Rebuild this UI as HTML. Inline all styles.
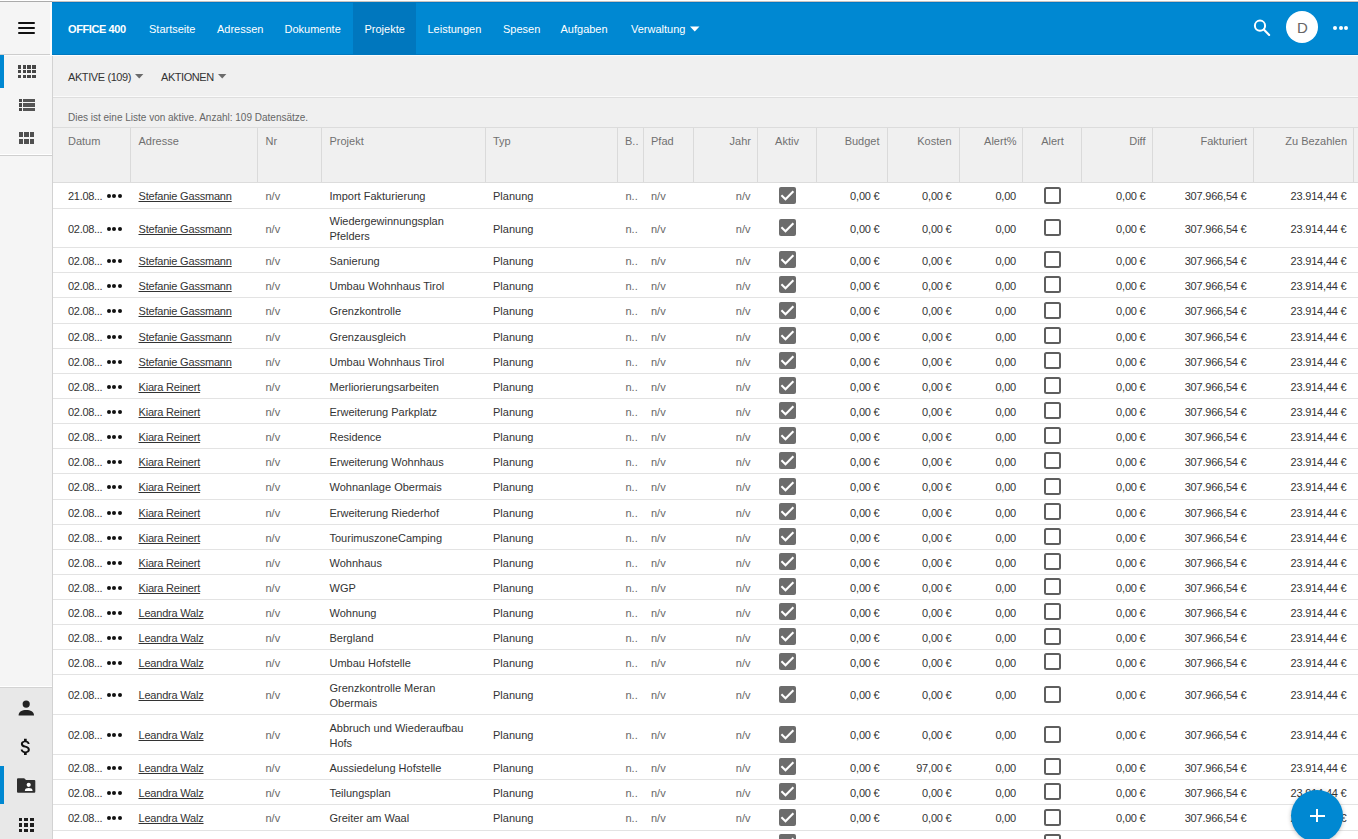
<!DOCTYPE html>
<html><head><meta charset="utf-8"><title>Projekte</title>
<style>
html,body{margin:0;padding:0;}
body{width:1358px;height:839px;overflow:hidden;position:relative;background:#fff;font-family:"Liberation Sans", sans-serif;}
.t{position:absolute;white-space:nowrap;line-height:20px;font-family:"Liberation Sans", sans-serif;}
</style></head><body>
<div style="position:absolute;left:0px;top:1px;width:52px;height:1px;background:#ababab;"></div><div style="position:absolute;left:52px;top:1px;width:1306px;height:1px;background:#c9c3bf;"></div><div style="position:absolute;left:0px;top:2px;width:52px;height:53px;background:#f5f5f5;"></div><div style="position:absolute;left:50px;top:2px;width:2px;height:53px;background:#fdfdfd;"></div><div style="position:absolute;left:52px;top:2px;width:1306px;height:53px;background:#0088d2;"></div><div style="position:absolute;left:52px;top:2px;width:1306px;height:1px;background:#0079c6;"></div><div style="position:absolute;left:52px;top:54px;width:1306px;height:1px;background:#0079c0;"></div><div style="position:absolute;left:353px;top:2px;width:63px;height:53px;background:#0077be;"></div><div style="position:absolute;left:0px;top:55px;width:1358px;height:1px;background:#fcfcfc;"></div><div style="position:absolute;left:0px;top:54px;width:50px;height:1px;background:#cdcdcd;"></div><div style="position:absolute;left:18px;top:22px;width:17px;height:2px;background:#111;border-radius:1px;"></div><div style="position:absolute;left:18px;top:27px;width:17px;height:2px;background:#111;border-radius:1px;"></div><div style="position:absolute;left:18px;top:32px;width:17px;height:2px;background:#111;border-radius:1px;"></div><div class="t" style="left:68px;top:19px;font-size:11px;color:#fff;font-weight:bold;letter-spacing:-0.4px;">OFFICE 400</div><div class="t" style="left:149px;top:19px;font-size:11px;color:#fff;">Startseite</div><div class="t" style="left:217px;top:19px;font-size:11px;color:#fff;">Adressen</div><div class="t" style="left:284.5px;top:19px;font-size:11px;color:#fff;">Dokumente</div><div class="t" style="left:364.5px;top:19px;font-size:11px;color:#fff;">Projekte</div><div class="t" style="left:427.5px;top:19px;font-size:11px;color:#fff;">Leistungen</div><div class="t" style="left:503px;top:19px;font-size:11px;color:#fff;">Spesen</div><div class="t" style="left:560.5px;top:19px;font-size:11px;color:#fff;">Aufgaben</div><div class="t" style="left:631px;top:19px;font-size:11px;color:#fff;">Verwaltung</div><svg style="position:absolute;left:690px;top:26px" width="10" height="6"><path d="M0 0.5 L9.5 0.5 L4.75 5.5 Z" fill="#fff"/></svg><svg style="position:absolute;left:1250px;top:16px" width="24" height="24"><circle cx="10" cy="9.7" r="5.1" fill="none" stroke="#fff" stroke-width="2"/><path d="M13.8 13.6 L19.2 19" stroke="#fff" stroke-width="2.1" stroke-linecap="round"/></svg><div style="position:absolute;left:1286px;top:11px;width:32px;height:32px;border-radius:50%;background:#fff"></div><div class="t" style="left:1202.5px;width:200px;text-align:center;top:18px;font-size:15px;color:#666;">D</div><div style="position:absolute;left:1332.9px;top:26px;width:4.2px;height:4.2px;border-radius:50%;background:#fff"></div><div style="position:absolute;left:1338.5px;top:26px;width:4.2px;height:4.2px;border-radius:50%;background:#fff"></div><div style="position:absolute;left:1344.1000000000001px;top:26px;width:4.2px;height:4.2px;border-radius:50%;background:#fff"></div><div style="position:absolute;left:0px;top:56px;width:52px;height:783px;background:#f5f5f5;"></div><div style="position:absolute;left:52px;top:56px;width:1px;height:783px;background:#d2d2d2;"></div><div style="position:absolute;left:0px;top:55px;width:4px;height:33px;background:#0088d2;"></div><div style="position:absolute;left:17.7px;top:65.0px;width:3.5px;height:3.5px;background:#474747;"></div><div style="position:absolute;left:22.549999999999997px;top:65.0px;width:3.5px;height:3.5px;background:#474747;"></div><div style="position:absolute;left:27.4px;top:65.0px;width:3.5px;height:3.5px;background:#474747;"></div><div style="position:absolute;left:32.25px;top:65.0px;width:3.5px;height:3.5px;background:#474747;"></div><div style="position:absolute;left:17.7px;top:69.95px;width:3.5px;height:3.5px;background:#474747;"></div><div style="position:absolute;left:22.549999999999997px;top:69.95px;width:3.5px;height:3.5px;background:#474747;"></div><div style="position:absolute;left:27.4px;top:69.95px;width:3.5px;height:3.5px;background:#474747;"></div><div style="position:absolute;left:32.25px;top:69.95px;width:3.5px;height:3.5px;background:#474747;"></div><div style="position:absolute;left:17.7px;top:74.9px;width:3.5px;height:3.5px;background:#474747;"></div><div style="position:absolute;left:22.549999999999997px;top:74.9px;width:3.5px;height:3.5px;background:#474747;"></div><div style="position:absolute;left:27.4px;top:74.9px;width:3.5px;height:3.5px;background:#474747;"></div><div style="position:absolute;left:32.25px;top:74.9px;width:3.5px;height:3.5px;background:#474747;"></div><div style="position:absolute;left:18.7px;top:98.5px;width:3.3px;height:3.3px;background:#474747;"></div><div style="position:absolute;left:23.3px;top:98.5px;width:11.4px;height:3.3px;background:#555;"></div><div style="position:absolute;left:18.7px;top:103.25px;width:3.3px;height:3.3px;background:#474747;"></div><div style="position:absolute;left:23.3px;top:103.25px;width:11.4px;height:3.3px;background:#555;"></div><div style="position:absolute;left:18.7px;top:108.0px;width:3.3px;height:3.3px;background:#474747;"></div><div style="position:absolute;left:23.3px;top:108.0px;width:11.4px;height:3.3px;background:#555;"></div><div style="position:absolute;left:18.7px;top:132px;width:4.5px;height:4.8px;background:#505050;"></div><div style="position:absolute;left:24.299999999999997px;top:132px;width:4.5px;height:4.8px;background:#505050;"></div><div style="position:absolute;left:29.9px;top:132px;width:4.5px;height:4.8px;background:#505050;"></div><div style="position:absolute;left:18.7px;top:139px;width:4.5px;height:4.8px;background:#505050;"></div><div style="position:absolute;left:24.299999999999997px;top:139px;width:4.5px;height:4.8px;background:#505050;"></div><div style="position:absolute;left:29.9px;top:139px;width:4.5px;height:4.8px;background:#505050;"></div><div style="position:absolute;left:0px;top:154px;width:52px;height:1px;background:#ffffff;"></div><div style="position:absolute;left:0px;top:155px;width:52px;height:1px;background:#cfcfcf;"></div><div style="position:absolute;left:0px;top:686px;width:52px;height:1px;background:#ffffff;"></div><div style="position:absolute;left:0px;top:687px;width:52px;height:1px;background:#d3d3d3;"></div><div style="position:absolute;left:0px;top:688px;width:52px;height:151px;background:#e8e8e8;"></div><div style="position:absolute;left:0px;top:766px;width:4px;height:38px;background:#0088d2;"></div><svg style="position:absolute;left:16px;top:698px" width="22" height="20"><circle cx="10.2" cy="6.1" r="3.6" fill="#222"/><path d="M2.6 17.5 C2.6 13.5 6 12 10.2 12 C14.4 12 18 13.5 18 17.5 Z" fill="#222"/></svg><svg style="position:absolute;left:14.8px;top:735.9px" width="21.6" height="21.6" viewBox="0 0 24 24"><path fill="#111" d="M11.8 10.9c-2.27-.59-3-1.2-3-2.15 0-1.09 1.01-1.85 2.7-1.85 1.78 0 2.44.85 2.5 2.1h2.21c-.07-1.72-1.12-3.3-3.21-3.81V3h-3v2.16c-1.94.42-3.5 1.68-3.5 3.61 0 2.31 1.91 3.46 4.7 4.130 2.5.6 3 1.480 3 2.41 0 .69-.49 1.79-2.7 1.79-2.06 0-2.87-.92-2.98-2.1h-2.2c.12 2.19 1.76 3.42 3.68 3.83V21h3v-2.15c1.95-.37 3.5-1.5 3.5-3.55 0-2.840-2.43-3.81-4.7-4.4z"/></svg><svg style="position:absolute;left:16px;top:777px" width="22" height="18"><path d="M1 2.2 Q1 1.2 2 1.2 L8.2 1.2 L10 3 L18.3 3 Q19.3 3 19.3 4 L19.3 14.8 Q19.3 15.8 18.3 15.8 L2 15.8 Q1 15.8 1 14.8 Z" fill="#2e2e2e"/><circle cx="12.7" cy="7.8" r="2.1" fill="#fff"/><path d="M8.8 14 C8.8 11.6 10.6 11 12.7 11 C14.8 11 16.6 11.6 16.6 14 Z" fill="#fff"/></svg><div style="position:absolute;left:18.6px;top:817.7px;width:3.9px;height:3.6px;background:#1e1e1e;"></div><div style="position:absolute;left:24.3px;top:817.7px;width:3.9px;height:3.6px;background:#1e1e1e;"></div><div style="position:absolute;left:30.0px;top:817.7px;width:3.9px;height:3.6px;background:#1e1e1e;"></div><div style="position:absolute;left:18.6px;top:823.3000000000001px;width:3.9px;height:3.6px;background:#1e1e1e;"></div><div style="position:absolute;left:24.3px;top:823.3000000000001px;width:3.9px;height:3.6px;background:#1e1e1e;"></div><div style="position:absolute;left:30.0px;top:823.3000000000001px;width:3.9px;height:3.6px;background:#1e1e1e;"></div><div style="position:absolute;left:18.6px;top:828.9000000000001px;width:3.9px;height:3.6px;background:#1e1e1e;"></div><div style="position:absolute;left:24.3px;top:828.9000000000001px;width:3.9px;height:3.6px;background:#1e1e1e;"></div><div style="position:absolute;left:30.0px;top:828.9000000000001px;width:3.9px;height:3.6px;background:#1e1e1e;"></div><div style="position:absolute;left:53px;top:56px;width:1305px;height:41px;background:#f0f0f0;"></div><div style="position:absolute;left:53px;top:96px;width:1305px;height:1px;background:#fafafa;"></div><div style="position:absolute;left:53px;top:97px;width:1305px;height:1px;background:#dedede;"></div><div class="t" style="left:68px;top:67px;font-size:11px;color:#333;letter-spacing:-0.4px;">AKTIVE (109)</div><svg style="position:absolute;left:134.5px;top:74px" width="9" height="5"><path d="M0 0 L8.4 0 L4.2 4.6 Z" fill="#6b6b6b"/></svg><div class="t" style="left:161px;top:67px;font-size:11px;color:#333;letter-spacing:-0.45px;">AKTIONEN</div><svg style="position:absolute;left:218px;top:74px" width="9" height="5"><path d="M0 0 L8.4 0 L4.2 4.6 Z" fill="#6b6b6b"/></svg><div style="position:absolute;left:53px;top:98px;width:1305px;height:29px;background:#f0f0f0;"></div><div class="t" style="left:68px;top:108px;font-size:10px;color:#666;">Dies ist eine Liste von aktive. Anzahl: 109 Datensätze.</div><div style="position:absolute;left:53px;top:127px;width:1305px;height:1px;background:#dcdcdc;"></div><div style="position:absolute;left:53px;top:128px;width:1305px;height:54px;background:#f0f0f0;"></div><div style="position:absolute;left:53px;top:182px;width:1305px;height:1px;background:#dcdcdc;"></div><div style="position:absolute;left:130px;top:128px;width:1px;height:54px;background:#dadada;"></div><div style="position:absolute;left:257px;top:128px;width:1px;height:54px;background:#dadada;"></div><div style="position:absolute;left:321px;top:128px;width:1px;height:54px;background:#dadada;"></div><div style="position:absolute;left:485px;top:128px;width:1px;height:54px;background:#dadada;"></div><div style="position:absolute;left:617px;top:128px;width:1px;height:54px;background:#dadada;"></div><div style="position:absolute;left:643px;top:128px;width:1px;height:54px;background:#dadada;"></div><div style="position:absolute;left:693px;top:128px;width:1px;height:54px;background:#dadada;"></div><div style="position:absolute;left:757px;top:128px;width:1px;height:54px;background:#dadada;"></div><div style="position:absolute;left:816px;top:128px;width:1px;height:54px;background:#dadada;"></div><div style="position:absolute;left:887px;top:128px;width:1px;height:54px;background:#dadada;"></div><div style="position:absolute;left:959px;top:128px;width:1px;height:54px;background:#dadada;"></div><div style="position:absolute;left:1022px;top:128px;width:1px;height:54px;background:#dadada;"></div><div style="position:absolute;left:1081px;top:128px;width:1px;height:54px;background:#dadada;"></div><div style="position:absolute;left:1152px;top:128px;width:1px;height:54px;background:#dadada;"></div><div style="position:absolute;left:1253px;top:128px;width:1px;height:54px;background:#dadada;"></div><div style="position:absolute;left:1353px;top:128px;width:1px;height:54px;background:#dadada;"></div><div class="t" style="left:68px;top:131px;font-size:11px;color:#707070;">Datum</div><div class="t" style="left:138.5px;top:131px;font-size:11px;color:#707070;">Adresse</div><div class="t" style="left:265.5px;top:131px;font-size:11px;color:#707070;">Nr</div><div class="t" style="left:329.5px;top:131px;font-size:11px;color:#707070;">Projekt</div><div class="t" style="left:493px;top:131px;font-size:11px;color:#707070;">Typ</div><div class="t" style="left:625px;top:131px;font-size:11px;color:#707070;">B..</div><div class="t" style="left:651px;top:131px;font-size:11px;color:#707070;">Pfad</div><div class="t" style="right:607px;top:131px;font-size:11px;color:#707070;">Jahr</div><div class="t" style="left:687px;width:200px;text-align:center;top:131px;font-size:11px;color:#707070;">Aktiv</div><div class="t" style="right:478.5px;top:131px;font-size:11px;color:#707070;">Budget</div><div class="t" style="right:406.5px;top:131px;font-size:11px;color:#707070;">Kosten</div><div class="t" style="right:341.5px;top:131px;font-size:11px;color:#707070;">Alert%</div><div class="t" style="left:952.5px;width:200px;text-align:center;top:131px;font-size:11px;color:#707070;">Alert</div><div class="t" style="right:212.5px;top:131px;font-size:11px;color:#707070;">Diff</div><div class="t" style="right:111px;top:131px;font-size:11px;color:#707070;">Fakturiert</div><div class="t" style="right:11px;top:131px;font-size:11px;color:#707070;">Zu Bezahlen</div><div style="position:absolute;left:53px;top:208px;width:1305px;height:1px;background:#e3e3e3;"></div><div class="t" style="left:68px;top:186px;font-size:11px;color:#333;letter-spacing:-0.3px;">21.08...</div><div style="position:absolute;left:106.60000000000001px;top:193.8px;width:4.2px;height:4.2px;border-radius:50%;background:#111"></div><div style="position:absolute;left:112.25px;top:193.8px;width:4.2px;height:4.2px;border-radius:50%;background:#111"></div><div style="position:absolute;left:117.9px;top:193.8px;width:4.2px;height:4.2px;border-radius:50%;background:#111"></div><div class="t" style="left:138.5px;top:186px;font-size:11px;color:#333;text-decoration:underline;letter-spacing:-0.2px;">Stefanie Gassmann</div><div class="t" style="left:265.5px;top:186px;font-size:11px;color:#666;">n/v</div><div class="t" style="left:329.5px;top:186px;font-size:11px;color:#333;">Import Fakturierung</div><div class="t" style="left:493px;top:186px;font-size:11px;color:#333;">Planung</div><div class="t" style="left:625.5px;top:186px;font-size:11px;color:#666;">n..</div><div class="t" style="left:651px;top:186px;font-size:11px;color:#666;">n/v</div><div class="t" style="right:607.5px;top:186px;font-size:11px;color:#666;">n/v</div><svg style="position:absolute;left:779px;top:187px" width="17" height="17"><rect x="0" y="0" width="17" height="17" rx="2" fill="#6c6c6c"/><path d="M2.4 8.3 L6.5 12.2 L14.4 4.3" fill="none" stroke="#fff" stroke-width="2.1"/></svg><div class="t" style="right:478.5px;top:186px;font-size:11px;color:#333;letter-spacing:-0.2px;">0,00 €</div><div class="t" style="right:406.5px;top:186px;font-size:11px;color:#333;letter-spacing:-0.2px;">0,00 €</div><div class="t" style="right:342px;top:186px;font-size:11px;color:#333;letter-spacing:-0.2px;">0,00</div><svg style="position:absolute;left:1044px;top:187px" width="17" height="17"><rect x="1" y="1" width="15" height="15" rx="1.5" fill="#fff" stroke="#5e5e5e" stroke-width="2"/></svg><div class="t" style="right:212.5px;top:186px;font-size:11px;color:#333;letter-spacing:-0.2px;">0,00 €</div><div class="t" style="right:111.5px;top:186px;font-size:11px;color:#333;letter-spacing:-0.2px;">307.966,54 €</div><div class="t" style="right:11.5px;top:186px;font-size:11px;color:#333;letter-spacing:-0.2px;">23.914,44 €</div><div style="position:absolute;left:53px;top:247px;width:1305px;height:1px;background:#e3e3e3;"></div><div class="t" style="left:68px;top:219px;font-size:11px;color:#333;letter-spacing:-0.3px;">02.08...</div><div style="position:absolute;left:106.60000000000001px;top:226.8px;width:4.2px;height:4.2px;border-radius:50%;background:#111"></div><div style="position:absolute;left:112.25px;top:226.8px;width:4.2px;height:4.2px;border-radius:50%;background:#111"></div><div style="position:absolute;left:117.9px;top:226.8px;width:4.2px;height:4.2px;border-radius:50%;background:#111"></div><div class="t" style="left:138.5px;top:219px;font-size:11px;color:#333;text-decoration:underline;letter-spacing:-0.2px;">Stefanie Gassmann</div><div class="t" style="left:265.5px;top:219px;font-size:11px;color:#666;">n/v</div><div class="t" style="left:329.5px;top:211px;font-size:11px;color:#333;">Wiedergewinnungsplan</div><div class="t" style="left:329.5px;top:226px;font-size:11px;color:#333;">Pfelders</div><div class="t" style="left:493px;top:219px;font-size:11px;color:#333;">Planung</div><div class="t" style="left:625.5px;top:219px;font-size:11px;color:#666;">n..</div><div class="t" style="left:651px;top:219px;font-size:11px;color:#666;">n/v</div><div class="t" style="right:607.5px;top:219px;font-size:11px;color:#666;">n/v</div><svg style="position:absolute;left:779px;top:219px" width="17" height="17"><rect x="0" y="0" width="17" height="17" rx="2" fill="#6c6c6c"/><path d="M2.4 8.3 L6.5 12.2 L14.4 4.3" fill="none" stroke="#fff" stroke-width="2.1"/></svg><div class="t" style="right:478.5px;top:219px;font-size:11px;color:#333;letter-spacing:-0.2px;">0,00 €</div><div class="t" style="right:406.5px;top:219px;font-size:11px;color:#333;letter-spacing:-0.2px;">0,00 €</div><div class="t" style="right:342px;top:219px;font-size:11px;color:#333;letter-spacing:-0.2px;">0,00</div><svg style="position:absolute;left:1044px;top:219px" width="17" height="17"><rect x="1" y="1" width="15" height="15" rx="1.5" fill="#fff" stroke="#5e5e5e" stroke-width="2"/></svg><div class="t" style="right:212.5px;top:219px;font-size:11px;color:#333;letter-spacing:-0.2px;">0,00 €</div><div class="t" style="right:111.5px;top:219px;font-size:11px;color:#333;letter-spacing:-0.2px;">307.966,54 €</div><div class="t" style="right:11.5px;top:219px;font-size:11px;color:#333;letter-spacing:-0.2px;">23.914,44 €</div><div style="position:absolute;left:53px;top:272px;width:1305px;height:1px;background:#e3e3e3;"></div><div class="t" style="left:68px;top:251px;font-size:11px;color:#333;letter-spacing:-0.3px;">02.08...</div><div style="position:absolute;left:106.60000000000001px;top:258.8px;width:4.2px;height:4.2px;border-radius:50%;background:#111"></div><div style="position:absolute;left:112.25px;top:258.8px;width:4.2px;height:4.2px;border-radius:50%;background:#111"></div><div style="position:absolute;left:117.9px;top:258.8px;width:4.2px;height:4.2px;border-radius:50%;background:#111"></div><div class="t" style="left:138.5px;top:251px;font-size:11px;color:#333;text-decoration:underline;letter-spacing:-0.2px;">Stefanie Gassmann</div><div class="t" style="left:265.5px;top:251px;font-size:11px;color:#666;">n/v</div><div class="t" style="left:329.5px;top:251px;font-size:11px;color:#333;">Sanierung</div><div class="t" style="left:493px;top:251px;font-size:11px;color:#333;">Planung</div><div class="t" style="left:625.5px;top:251px;font-size:11px;color:#666;">n..</div><div class="t" style="left:651px;top:251px;font-size:11px;color:#666;">n/v</div><div class="t" style="right:607.5px;top:251px;font-size:11px;color:#666;">n/v</div><svg style="position:absolute;left:779px;top:251px" width="17" height="17"><rect x="0" y="0" width="17" height="17" rx="2" fill="#6c6c6c"/><path d="M2.4 8.3 L6.5 12.2 L14.4 4.3" fill="none" stroke="#fff" stroke-width="2.1"/></svg><div class="t" style="right:478.5px;top:251px;font-size:11px;color:#333;letter-spacing:-0.2px;">0,00 €</div><div class="t" style="right:406.5px;top:251px;font-size:11px;color:#333;letter-spacing:-0.2px;">0,00 €</div><div class="t" style="right:342px;top:251px;font-size:11px;color:#333;letter-spacing:-0.2px;">0,00</div><svg style="position:absolute;left:1044px;top:251px" width="17" height="17"><rect x="1" y="1" width="15" height="15" rx="1.5" fill="#fff" stroke="#5e5e5e" stroke-width="2"/></svg><div class="t" style="right:212.5px;top:251px;font-size:11px;color:#333;letter-spacing:-0.2px;">0,00 €</div><div class="t" style="right:111.5px;top:251px;font-size:11px;color:#333;letter-spacing:-0.2px;">307.966,54 €</div><div class="t" style="right:11.5px;top:251px;font-size:11px;color:#333;letter-spacing:-0.2px;">23.914,44 €</div><div style="position:absolute;left:53px;top:297px;width:1305px;height:1px;background:#e3e3e3;"></div><div class="t" style="left:68px;top:276px;font-size:11px;color:#333;letter-spacing:-0.3px;">02.08...</div><div style="position:absolute;left:106.60000000000001px;top:283.8px;width:4.2px;height:4.2px;border-radius:50%;background:#111"></div><div style="position:absolute;left:112.25px;top:283.8px;width:4.2px;height:4.2px;border-radius:50%;background:#111"></div><div style="position:absolute;left:117.9px;top:283.8px;width:4.2px;height:4.2px;border-radius:50%;background:#111"></div><div class="t" style="left:138.5px;top:276px;font-size:11px;color:#333;text-decoration:underline;letter-spacing:-0.2px;">Stefanie Gassmann</div><div class="t" style="left:265.5px;top:276px;font-size:11px;color:#666;">n/v</div><div class="t" style="left:329.5px;top:276px;font-size:11px;color:#333;">Umbau Wohnhaus Tirol</div><div class="t" style="left:493px;top:276px;font-size:11px;color:#333;">Planung</div><div class="t" style="left:625.5px;top:276px;font-size:11px;color:#666;">n..</div><div class="t" style="left:651px;top:276px;font-size:11px;color:#666;">n/v</div><div class="t" style="right:607.5px;top:276px;font-size:11px;color:#666;">n/v</div><svg style="position:absolute;left:779px;top:276px" width="17" height="17"><rect x="0" y="0" width="17" height="17" rx="2" fill="#6c6c6c"/><path d="M2.4 8.3 L6.5 12.2 L14.4 4.3" fill="none" stroke="#fff" stroke-width="2.1"/></svg><div class="t" style="right:478.5px;top:276px;font-size:11px;color:#333;letter-spacing:-0.2px;">0,00 €</div><div class="t" style="right:406.5px;top:276px;font-size:11px;color:#333;letter-spacing:-0.2px;">0,00 €</div><div class="t" style="right:342px;top:276px;font-size:11px;color:#333;letter-spacing:-0.2px;">0,00</div><svg style="position:absolute;left:1044px;top:276px" width="17" height="17"><rect x="1" y="1" width="15" height="15" rx="1.5" fill="#fff" stroke="#5e5e5e" stroke-width="2"/></svg><div class="t" style="right:212.5px;top:276px;font-size:11px;color:#333;letter-spacing:-0.2px;">0,00 €</div><div class="t" style="right:111.5px;top:276px;font-size:11px;color:#333;letter-spacing:-0.2px;">307.966,54 €</div><div class="t" style="right:11.5px;top:276px;font-size:11px;color:#333;letter-spacing:-0.2px;">23.914,44 €</div><div style="position:absolute;left:53px;top:323px;width:1305px;height:1px;background:#e3e3e3;"></div><div class="t" style="left:68px;top:301px;font-size:11px;color:#333;letter-spacing:-0.3px;">02.08...</div><div style="position:absolute;left:106.60000000000001px;top:308.8px;width:4.2px;height:4.2px;border-radius:50%;background:#111"></div><div style="position:absolute;left:112.25px;top:308.8px;width:4.2px;height:4.2px;border-radius:50%;background:#111"></div><div style="position:absolute;left:117.9px;top:308.8px;width:4.2px;height:4.2px;border-radius:50%;background:#111"></div><div class="t" style="left:138.5px;top:301px;font-size:11px;color:#333;text-decoration:underline;letter-spacing:-0.2px;">Stefanie Gassmann</div><div class="t" style="left:265.5px;top:301px;font-size:11px;color:#666;">n/v</div><div class="t" style="left:329.5px;top:301px;font-size:11px;color:#333;">Grenzkontrolle</div><div class="t" style="left:493px;top:301px;font-size:11px;color:#333;">Planung</div><div class="t" style="left:625.5px;top:301px;font-size:11px;color:#666;">n..</div><div class="t" style="left:651px;top:301px;font-size:11px;color:#666;">n/v</div><div class="t" style="right:607.5px;top:301px;font-size:11px;color:#666;">n/v</div><svg style="position:absolute;left:779px;top:302px" width="17" height="17"><rect x="0" y="0" width="17" height="17" rx="2" fill="#6c6c6c"/><path d="M2.4 8.3 L6.5 12.2 L14.4 4.3" fill="none" stroke="#fff" stroke-width="2.1"/></svg><div class="t" style="right:478.5px;top:301px;font-size:11px;color:#333;letter-spacing:-0.2px;">0,00 €</div><div class="t" style="right:406.5px;top:301px;font-size:11px;color:#333;letter-spacing:-0.2px;">0,00 €</div><div class="t" style="right:342px;top:301px;font-size:11px;color:#333;letter-spacing:-0.2px;">0,00</div><svg style="position:absolute;left:1044px;top:302px" width="17" height="17"><rect x="1" y="1" width="15" height="15" rx="1.5" fill="#fff" stroke="#5e5e5e" stroke-width="2"/></svg><div class="t" style="right:212.5px;top:301px;font-size:11px;color:#333;letter-spacing:-0.2px;">0,00 €</div><div class="t" style="right:111.5px;top:301px;font-size:11px;color:#333;letter-spacing:-0.2px;">307.966,54 €</div><div class="t" style="right:11.5px;top:301px;font-size:11px;color:#333;letter-spacing:-0.2px;">23.914,44 €</div><div style="position:absolute;left:53px;top:348px;width:1305px;height:1px;background:#e3e3e3;"></div><div class="t" style="left:68px;top:327px;font-size:11px;color:#333;letter-spacing:-0.3px;">02.08...</div><div style="position:absolute;left:106.60000000000001px;top:334.8px;width:4.2px;height:4.2px;border-radius:50%;background:#111"></div><div style="position:absolute;left:112.25px;top:334.8px;width:4.2px;height:4.2px;border-radius:50%;background:#111"></div><div style="position:absolute;left:117.9px;top:334.8px;width:4.2px;height:4.2px;border-radius:50%;background:#111"></div><div class="t" style="left:138.5px;top:327px;font-size:11px;color:#333;text-decoration:underline;letter-spacing:-0.2px;">Stefanie Gassmann</div><div class="t" style="left:265.5px;top:327px;font-size:11px;color:#666;">n/v</div><div class="t" style="left:329.5px;top:327px;font-size:11px;color:#333;">Grenzausgleich</div><div class="t" style="left:493px;top:327px;font-size:11px;color:#333;">Planung</div><div class="t" style="left:625.5px;top:327px;font-size:11px;color:#666;">n..</div><div class="t" style="left:651px;top:327px;font-size:11px;color:#666;">n/v</div><div class="t" style="right:607.5px;top:327px;font-size:11px;color:#666;">n/v</div><svg style="position:absolute;left:779px;top:327px" width="17" height="17"><rect x="0" y="0" width="17" height="17" rx="2" fill="#6c6c6c"/><path d="M2.4 8.3 L6.5 12.2 L14.4 4.3" fill="none" stroke="#fff" stroke-width="2.1"/></svg><div class="t" style="right:478.5px;top:327px;font-size:11px;color:#333;letter-spacing:-0.2px;">0,00 €</div><div class="t" style="right:406.5px;top:327px;font-size:11px;color:#333;letter-spacing:-0.2px;">0,00 €</div><div class="t" style="right:342px;top:327px;font-size:11px;color:#333;letter-spacing:-0.2px;">0,00</div><svg style="position:absolute;left:1044px;top:327px" width="17" height="17"><rect x="1" y="1" width="15" height="15" rx="1.5" fill="#fff" stroke="#5e5e5e" stroke-width="2"/></svg><div class="t" style="right:212.5px;top:327px;font-size:11px;color:#333;letter-spacing:-0.2px;">0,00 €</div><div class="t" style="right:111.5px;top:327px;font-size:11px;color:#333;letter-spacing:-0.2px;">307.966,54 €</div><div class="t" style="right:11.5px;top:327px;font-size:11px;color:#333;letter-spacing:-0.2px;">23.914,44 €</div><div style="position:absolute;left:53px;top:373px;width:1305px;height:1px;background:#e3e3e3;"></div><div class="t" style="left:68px;top:352px;font-size:11px;color:#333;letter-spacing:-0.3px;">02.08...</div><div style="position:absolute;left:106.60000000000001px;top:359.8px;width:4.2px;height:4.2px;border-radius:50%;background:#111"></div><div style="position:absolute;left:112.25px;top:359.8px;width:4.2px;height:4.2px;border-radius:50%;background:#111"></div><div style="position:absolute;left:117.9px;top:359.8px;width:4.2px;height:4.2px;border-radius:50%;background:#111"></div><div class="t" style="left:138.5px;top:352px;font-size:11px;color:#333;text-decoration:underline;letter-spacing:-0.2px;">Stefanie Gassmann</div><div class="t" style="left:265.5px;top:352px;font-size:11px;color:#666;">n/v</div><div class="t" style="left:329.5px;top:352px;font-size:11px;color:#333;">Umbau Wohnhaus Tirol</div><div class="t" style="left:493px;top:352px;font-size:11px;color:#333;">Planung</div><div class="t" style="left:625.5px;top:352px;font-size:11px;color:#666;">n..</div><div class="t" style="left:651px;top:352px;font-size:11px;color:#666;">n/v</div><div class="t" style="right:607.5px;top:352px;font-size:11px;color:#666;">n/v</div><svg style="position:absolute;left:779px;top:352px" width="17" height="17"><rect x="0" y="0" width="17" height="17" rx="2" fill="#6c6c6c"/><path d="M2.4 8.3 L6.5 12.2 L14.4 4.3" fill="none" stroke="#fff" stroke-width="2.1"/></svg><div class="t" style="right:478.5px;top:352px;font-size:11px;color:#333;letter-spacing:-0.2px;">0,00 €</div><div class="t" style="right:406.5px;top:352px;font-size:11px;color:#333;letter-spacing:-0.2px;">0,00 €</div><div class="t" style="right:342px;top:352px;font-size:11px;color:#333;letter-spacing:-0.2px;">0,00</div><svg style="position:absolute;left:1044px;top:352px" width="17" height="17"><rect x="1" y="1" width="15" height="15" rx="1.5" fill="#fff" stroke="#5e5e5e" stroke-width="2"/></svg><div class="t" style="right:212.5px;top:352px;font-size:11px;color:#333;letter-spacing:-0.2px;">0,00 €</div><div class="t" style="right:111.5px;top:352px;font-size:11px;color:#333;letter-spacing:-0.2px;">307.966,54 €</div><div class="t" style="right:11.5px;top:352px;font-size:11px;color:#333;letter-spacing:-0.2px;">23.914,44 €</div><div style="position:absolute;left:53px;top:398px;width:1305px;height:1px;background:#e3e3e3;"></div><div class="t" style="left:68px;top:377px;font-size:11px;color:#333;letter-spacing:-0.3px;">02.08...</div><div style="position:absolute;left:106.60000000000001px;top:384.8px;width:4.2px;height:4.2px;border-radius:50%;background:#111"></div><div style="position:absolute;left:112.25px;top:384.8px;width:4.2px;height:4.2px;border-radius:50%;background:#111"></div><div style="position:absolute;left:117.9px;top:384.8px;width:4.2px;height:4.2px;border-radius:50%;background:#111"></div><div class="t" style="left:138.5px;top:377px;font-size:11px;color:#333;text-decoration:underline;letter-spacing:-0.2px;">Kiara Reinert</div><div class="t" style="left:265.5px;top:377px;font-size:11px;color:#666;">n/v</div><div class="t" style="left:329.5px;top:377px;font-size:11px;color:#333;">Merliorierungsarbeiten</div><div class="t" style="left:493px;top:377px;font-size:11px;color:#333;">Planung</div><div class="t" style="left:625.5px;top:377px;font-size:11px;color:#666;">n..</div><div class="t" style="left:651px;top:377px;font-size:11px;color:#666;">n/v</div><div class="t" style="right:607.5px;top:377px;font-size:11px;color:#666;">n/v</div><svg style="position:absolute;left:779px;top:377px" width="17" height="17"><rect x="0" y="0" width="17" height="17" rx="2" fill="#6c6c6c"/><path d="M2.4 8.3 L6.5 12.2 L14.4 4.3" fill="none" stroke="#fff" stroke-width="2.1"/></svg><div class="t" style="right:478.5px;top:377px;font-size:11px;color:#333;letter-spacing:-0.2px;">0,00 €</div><div class="t" style="right:406.5px;top:377px;font-size:11px;color:#333;letter-spacing:-0.2px;">0,00 €</div><div class="t" style="right:342px;top:377px;font-size:11px;color:#333;letter-spacing:-0.2px;">0,00</div><svg style="position:absolute;left:1044px;top:377px" width="17" height="17"><rect x="1" y="1" width="15" height="15" rx="1.5" fill="#fff" stroke="#5e5e5e" stroke-width="2"/></svg><div class="t" style="right:212.5px;top:377px;font-size:11px;color:#333;letter-spacing:-0.2px;">0,00 €</div><div class="t" style="right:111.5px;top:377px;font-size:11px;color:#333;letter-spacing:-0.2px;">307.966,54 €</div><div class="t" style="right:11.5px;top:377px;font-size:11px;color:#333;letter-spacing:-0.2px;">23.914,44 €</div><div style="position:absolute;left:53px;top:423px;width:1305px;height:1px;background:#e3e3e3;"></div><div class="t" style="left:68px;top:402px;font-size:11px;color:#333;letter-spacing:-0.3px;">02.08...</div><div style="position:absolute;left:106.60000000000001px;top:409.8px;width:4.2px;height:4.2px;border-radius:50%;background:#111"></div><div style="position:absolute;left:112.25px;top:409.8px;width:4.2px;height:4.2px;border-radius:50%;background:#111"></div><div style="position:absolute;left:117.9px;top:409.8px;width:4.2px;height:4.2px;border-radius:50%;background:#111"></div><div class="t" style="left:138.5px;top:402px;font-size:11px;color:#333;text-decoration:underline;letter-spacing:-0.2px;">Kiara Reinert</div><div class="t" style="left:265.5px;top:402px;font-size:11px;color:#666;">n/v</div><div class="t" style="left:329.5px;top:402px;font-size:11px;color:#333;">Erweiterung Parkplatz</div><div class="t" style="left:493px;top:402px;font-size:11px;color:#333;">Planung</div><div class="t" style="left:625.5px;top:402px;font-size:11px;color:#666;">n..</div><div class="t" style="left:651px;top:402px;font-size:11px;color:#666;">n/v</div><div class="t" style="right:607.5px;top:402px;font-size:11px;color:#666;">n/v</div><svg style="position:absolute;left:779px;top:402px" width="17" height="17"><rect x="0" y="0" width="17" height="17" rx="2" fill="#6c6c6c"/><path d="M2.4 8.3 L6.5 12.2 L14.4 4.3" fill="none" stroke="#fff" stroke-width="2.1"/></svg><div class="t" style="right:478.5px;top:402px;font-size:11px;color:#333;letter-spacing:-0.2px;">0,00 €</div><div class="t" style="right:406.5px;top:402px;font-size:11px;color:#333;letter-spacing:-0.2px;">0,00 €</div><div class="t" style="right:342px;top:402px;font-size:11px;color:#333;letter-spacing:-0.2px;">0,00</div><svg style="position:absolute;left:1044px;top:402px" width="17" height="17"><rect x="1" y="1" width="15" height="15" rx="1.5" fill="#fff" stroke="#5e5e5e" stroke-width="2"/></svg><div class="t" style="right:212.5px;top:402px;font-size:11px;color:#333;letter-spacing:-0.2px;">0,00 €</div><div class="t" style="right:111.5px;top:402px;font-size:11px;color:#333;letter-spacing:-0.2px;">307.966,54 €</div><div class="t" style="right:11.5px;top:402px;font-size:11px;color:#333;letter-spacing:-0.2px;">23.914,44 €</div><div style="position:absolute;left:53px;top:448px;width:1305px;height:1px;background:#e3e3e3;"></div><div class="t" style="left:68px;top:427px;font-size:11px;color:#333;letter-spacing:-0.3px;">02.08...</div><div style="position:absolute;left:106.60000000000001px;top:434.8px;width:4.2px;height:4.2px;border-radius:50%;background:#111"></div><div style="position:absolute;left:112.25px;top:434.8px;width:4.2px;height:4.2px;border-radius:50%;background:#111"></div><div style="position:absolute;left:117.9px;top:434.8px;width:4.2px;height:4.2px;border-radius:50%;background:#111"></div><div class="t" style="left:138.5px;top:427px;font-size:11px;color:#333;text-decoration:underline;letter-spacing:-0.2px;">Kiara Reinert</div><div class="t" style="left:265.5px;top:427px;font-size:11px;color:#666;">n/v</div><div class="t" style="left:329.5px;top:427px;font-size:11px;color:#333;">Residence</div><div class="t" style="left:493px;top:427px;font-size:11px;color:#333;">Planung</div><div class="t" style="left:625.5px;top:427px;font-size:11px;color:#666;">n..</div><div class="t" style="left:651px;top:427px;font-size:11px;color:#666;">n/v</div><div class="t" style="right:607.5px;top:427px;font-size:11px;color:#666;">n/v</div><svg style="position:absolute;left:779px;top:427px" width="17" height="17"><rect x="0" y="0" width="17" height="17" rx="2" fill="#6c6c6c"/><path d="M2.4 8.3 L6.5 12.2 L14.4 4.3" fill="none" stroke="#fff" stroke-width="2.1"/></svg><div class="t" style="right:478.5px;top:427px;font-size:11px;color:#333;letter-spacing:-0.2px;">0,00 €</div><div class="t" style="right:406.5px;top:427px;font-size:11px;color:#333;letter-spacing:-0.2px;">0,00 €</div><div class="t" style="right:342px;top:427px;font-size:11px;color:#333;letter-spacing:-0.2px;">0,00</div><svg style="position:absolute;left:1044px;top:427px" width="17" height="17"><rect x="1" y="1" width="15" height="15" rx="1.5" fill="#fff" stroke="#5e5e5e" stroke-width="2"/></svg><div class="t" style="right:212.5px;top:427px;font-size:11px;color:#333;letter-spacing:-0.2px;">0,00 €</div><div class="t" style="right:111.5px;top:427px;font-size:11px;color:#333;letter-spacing:-0.2px;">307.966,54 €</div><div class="t" style="right:11.5px;top:427px;font-size:11px;color:#333;letter-spacing:-0.2px;">23.914,44 €</div><div style="position:absolute;left:53px;top:473px;width:1305px;height:1px;background:#e3e3e3;"></div><div class="t" style="left:68px;top:452px;font-size:11px;color:#333;letter-spacing:-0.3px;">02.08...</div><div style="position:absolute;left:106.60000000000001px;top:459.8px;width:4.2px;height:4.2px;border-radius:50%;background:#111"></div><div style="position:absolute;left:112.25px;top:459.8px;width:4.2px;height:4.2px;border-radius:50%;background:#111"></div><div style="position:absolute;left:117.9px;top:459.8px;width:4.2px;height:4.2px;border-radius:50%;background:#111"></div><div class="t" style="left:138.5px;top:452px;font-size:11px;color:#333;text-decoration:underline;letter-spacing:-0.2px;">Kiara Reinert</div><div class="t" style="left:265.5px;top:452px;font-size:11px;color:#666;">n/v</div><div class="t" style="left:329.5px;top:452px;font-size:11px;color:#333;">Erweiterung Wohnhaus</div><div class="t" style="left:493px;top:452px;font-size:11px;color:#333;">Planung</div><div class="t" style="left:625.5px;top:452px;font-size:11px;color:#666;">n..</div><div class="t" style="left:651px;top:452px;font-size:11px;color:#666;">n/v</div><div class="t" style="right:607.5px;top:452px;font-size:11px;color:#666;">n/v</div><svg style="position:absolute;left:779px;top:452px" width="17" height="17"><rect x="0" y="0" width="17" height="17" rx="2" fill="#6c6c6c"/><path d="M2.4 8.3 L6.5 12.2 L14.4 4.3" fill="none" stroke="#fff" stroke-width="2.1"/></svg><div class="t" style="right:478.5px;top:452px;font-size:11px;color:#333;letter-spacing:-0.2px;">0,00 €</div><div class="t" style="right:406.5px;top:452px;font-size:11px;color:#333;letter-spacing:-0.2px;">0,00 €</div><div class="t" style="right:342px;top:452px;font-size:11px;color:#333;letter-spacing:-0.2px;">0,00</div><svg style="position:absolute;left:1044px;top:452px" width="17" height="17"><rect x="1" y="1" width="15" height="15" rx="1.5" fill="#fff" stroke="#5e5e5e" stroke-width="2"/></svg><div class="t" style="right:212.5px;top:452px;font-size:11px;color:#333;letter-spacing:-0.2px;">0,00 €</div><div class="t" style="right:111.5px;top:452px;font-size:11px;color:#333;letter-spacing:-0.2px;">307.966,54 €</div><div class="t" style="right:11.5px;top:452px;font-size:11px;color:#333;letter-spacing:-0.2px;">23.914,44 €</div><div style="position:absolute;left:53px;top:499px;width:1305px;height:1px;background:#e3e3e3;"></div><div class="t" style="left:68px;top:477px;font-size:11px;color:#333;letter-spacing:-0.3px;">02.08...</div><div style="position:absolute;left:106.60000000000001px;top:484.8px;width:4.2px;height:4.2px;border-radius:50%;background:#111"></div><div style="position:absolute;left:112.25px;top:484.8px;width:4.2px;height:4.2px;border-radius:50%;background:#111"></div><div style="position:absolute;left:117.9px;top:484.8px;width:4.2px;height:4.2px;border-radius:50%;background:#111"></div><div class="t" style="left:138.5px;top:477px;font-size:11px;color:#333;text-decoration:underline;letter-spacing:-0.2px;">Kiara Reinert</div><div class="t" style="left:265.5px;top:477px;font-size:11px;color:#666;">n/v</div><div class="t" style="left:329.5px;top:477px;font-size:11px;color:#333;">Wohnanlage Obermais</div><div class="t" style="left:493px;top:477px;font-size:11px;color:#333;">Planung</div><div class="t" style="left:625.5px;top:477px;font-size:11px;color:#666;">n..</div><div class="t" style="left:651px;top:477px;font-size:11px;color:#666;">n/v</div><div class="t" style="right:607.5px;top:477px;font-size:11px;color:#666;">n/v</div><svg style="position:absolute;left:779px;top:478px" width="17" height="17"><rect x="0" y="0" width="17" height="17" rx="2" fill="#6c6c6c"/><path d="M2.4 8.3 L6.5 12.2 L14.4 4.3" fill="none" stroke="#fff" stroke-width="2.1"/></svg><div class="t" style="right:478.5px;top:477px;font-size:11px;color:#333;letter-spacing:-0.2px;">0,00 €</div><div class="t" style="right:406.5px;top:477px;font-size:11px;color:#333;letter-spacing:-0.2px;">0,00 €</div><div class="t" style="right:342px;top:477px;font-size:11px;color:#333;letter-spacing:-0.2px;">0,00</div><svg style="position:absolute;left:1044px;top:478px" width="17" height="17"><rect x="1" y="1" width="15" height="15" rx="1.5" fill="#fff" stroke="#5e5e5e" stroke-width="2"/></svg><div class="t" style="right:212.5px;top:477px;font-size:11px;color:#333;letter-spacing:-0.2px;">0,00 €</div><div class="t" style="right:111.5px;top:477px;font-size:11px;color:#333;letter-spacing:-0.2px;">307.966,54 €</div><div class="t" style="right:11.5px;top:477px;font-size:11px;color:#333;letter-spacing:-0.2px;">23.914,44 €</div><div style="position:absolute;left:53px;top:524px;width:1305px;height:1px;background:#e3e3e3;"></div><div class="t" style="left:68px;top:503px;font-size:11px;color:#333;letter-spacing:-0.3px;">02.08...</div><div style="position:absolute;left:106.60000000000001px;top:510.8px;width:4.2px;height:4.2px;border-radius:50%;background:#111"></div><div style="position:absolute;left:112.25px;top:510.8px;width:4.2px;height:4.2px;border-radius:50%;background:#111"></div><div style="position:absolute;left:117.9px;top:510.8px;width:4.2px;height:4.2px;border-radius:50%;background:#111"></div><div class="t" style="left:138.5px;top:503px;font-size:11px;color:#333;text-decoration:underline;letter-spacing:-0.2px;">Kiara Reinert</div><div class="t" style="left:265.5px;top:503px;font-size:11px;color:#666;">n/v</div><div class="t" style="left:329.5px;top:503px;font-size:11px;color:#333;">Erweiterung Riederhof</div><div class="t" style="left:493px;top:503px;font-size:11px;color:#333;">Planung</div><div class="t" style="left:625.5px;top:503px;font-size:11px;color:#666;">n..</div><div class="t" style="left:651px;top:503px;font-size:11px;color:#666;">n/v</div><div class="t" style="right:607.5px;top:503px;font-size:11px;color:#666;">n/v</div><svg style="position:absolute;left:779px;top:503px" width="17" height="17"><rect x="0" y="0" width="17" height="17" rx="2" fill="#6c6c6c"/><path d="M2.4 8.3 L6.5 12.2 L14.4 4.3" fill="none" stroke="#fff" stroke-width="2.1"/></svg><div class="t" style="right:478.5px;top:503px;font-size:11px;color:#333;letter-spacing:-0.2px;">0,00 €</div><div class="t" style="right:406.5px;top:503px;font-size:11px;color:#333;letter-spacing:-0.2px;">0,00 €</div><div class="t" style="right:342px;top:503px;font-size:11px;color:#333;letter-spacing:-0.2px;">0,00</div><svg style="position:absolute;left:1044px;top:503px" width="17" height="17"><rect x="1" y="1" width="15" height="15" rx="1.5" fill="#fff" stroke="#5e5e5e" stroke-width="2"/></svg><div class="t" style="right:212.5px;top:503px;font-size:11px;color:#333;letter-spacing:-0.2px;">0,00 €</div><div class="t" style="right:111.5px;top:503px;font-size:11px;color:#333;letter-spacing:-0.2px;">307.966,54 €</div><div class="t" style="right:11.5px;top:503px;font-size:11px;color:#333;letter-spacing:-0.2px;">23.914,44 €</div><div style="position:absolute;left:53px;top:549px;width:1305px;height:1px;background:#e3e3e3;"></div><div class="t" style="left:68px;top:528px;font-size:11px;color:#333;letter-spacing:-0.3px;">02.08...</div><div style="position:absolute;left:106.60000000000001px;top:535.8px;width:4.2px;height:4.2px;border-radius:50%;background:#111"></div><div style="position:absolute;left:112.25px;top:535.8px;width:4.2px;height:4.2px;border-radius:50%;background:#111"></div><div style="position:absolute;left:117.9px;top:535.8px;width:4.2px;height:4.2px;border-radius:50%;background:#111"></div><div class="t" style="left:138.5px;top:528px;font-size:11px;color:#333;text-decoration:underline;letter-spacing:-0.2px;">Kiara Reinert</div><div class="t" style="left:265.5px;top:528px;font-size:11px;color:#666;">n/v</div><div class="t" style="left:329.5px;top:528px;font-size:11px;color:#333;">TourimuszoneCamping</div><div class="t" style="left:493px;top:528px;font-size:11px;color:#333;">Planung</div><div class="t" style="left:625.5px;top:528px;font-size:11px;color:#666;">n..</div><div class="t" style="left:651px;top:528px;font-size:11px;color:#666;">n/v</div><div class="t" style="right:607.5px;top:528px;font-size:11px;color:#666;">n/v</div><svg style="position:absolute;left:779px;top:528px" width="17" height="17"><rect x="0" y="0" width="17" height="17" rx="2" fill="#6c6c6c"/><path d="M2.4 8.3 L6.5 12.2 L14.4 4.3" fill="none" stroke="#fff" stroke-width="2.1"/></svg><div class="t" style="right:478.5px;top:528px;font-size:11px;color:#333;letter-spacing:-0.2px;">0,00 €</div><div class="t" style="right:406.5px;top:528px;font-size:11px;color:#333;letter-spacing:-0.2px;">0,00 €</div><div class="t" style="right:342px;top:528px;font-size:11px;color:#333;letter-spacing:-0.2px;">0,00</div><svg style="position:absolute;left:1044px;top:528px" width="17" height="17"><rect x="1" y="1" width="15" height="15" rx="1.5" fill="#fff" stroke="#5e5e5e" stroke-width="2"/></svg><div class="t" style="right:212.5px;top:528px;font-size:11px;color:#333;letter-spacing:-0.2px;">0,00 €</div><div class="t" style="right:111.5px;top:528px;font-size:11px;color:#333;letter-spacing:-0.2px;">307.966,54 €</div><div class="t" style="right:11.5px;top:528px;font-size:11px;color:#333;letter-spacing:-0.2px;">23.914,44 €</div><div style="position:absolute;left:53px;top:574px;width:1305px;height:1px;background:#e3e3e3;"></div><div class="t" style="left:68px;top:553px;font-size:11px;color:#333;letter-spacing:-0.3px;">02.08...</div><div style="position:absolute;left:106.60000000000001px;top:560.8px;width:4.2px;height:4.2px;border-radius:50%;background:#111"></div><div style="position:absolute;left:112.25px;top:560.8px;width:4.2px;height:4.2px;border-radius:50%;background:#111"></div><div style="position:absolute;left:117.9px;top:560.8px;width:4.2px;height:4.2px;border-radius:50%;background:#111"></div><div class="t" style="left:138.5px;top:553px;font-size:11px;color:#333;text-decoration:underline;letter-spacing:-0.2px;">Kiara Reinert</div><div class="t" style="left:265.5px;top:553px;font-size:11px;color:#666;">n/v</div><div class="t" style="left:329.5px;top:553px;font-size:11px;color:#333;">Wohnhaus</div><div class="t" style="left:493px;top:553px;font-size:11px;color:#333;">Planung</div><div class="t" style="left:625.5px;top:553px;font-size:11px;color:#666;">n..</div><div class="t" style="left:651px;top:553px;font-size:11px;color:#666;">n/v</div><div class="t" style="right:607.5px;top:553px;font-size:11px;color:#666;">n/v</div><svg style="position:absolute;left:779px;top:553px" width="17" height="17"><rect x="0" y="0" width="17" height="17" rx="2" fill="#6c6c6c"/><path d="M2.4 8.3 L6.5 12.2 L14.4 4.3" fill="none" stroke="#fff" stroke-width="2.1"/></svg><div class="t" style="right:478.5px;top:553px;font-size:11px;color:#333;letter-spacing:-0.2px;">0,00 €</div><div class="t" style="right:406.5px;top:553px;font-size:11px;color:#333;letter-spacing:-0.2px;">0,00 €</div><div class="t" style="right:342px;top:553px;font-size:11px;color:#333;letter-spacing:-0.2px;">0,00</div><svg style="position:absolute;left:1044px;top:553px" width="17" height="17"><rect x="1" y="1" width="15" height="15" rx="1.5" fill="#fff" stroke="#5e5e5e" stroke-width="2"/></svg><div class="t" style="right:212.5px;top:553px;font-size:11px;color:#333;letter-spacing:-0.2px;">0,00 €</div><div class="t" style="right:111.5px;top:553px;font-size:11px;color:#333;letter-spacing:-0.2px;">307.966,54 €</div><div class="t" style="right:11.5px;top:553px;font-size:11px;color:#333;letter-spacing:-0.2px;">23.914,44 €</div><div style="position:absolute;left:53px;top:599px;width:1305px;height:1px;background:#e3e3e3;"></div><div class="t" style="left:68px;top:578px;font-size:11px;color:#333;letter-spacing:-0.3px;">02.08...</div><div style="position:absolute;left:106.60000000000001px;top:585.8px;width:4.2px;height:4.2px;border-radius:50%;background:#111"></div><div style="position:absolute;left:112.25px;top:585.8px;width:4.2px;height:4.2px;border-radius:50%;background:#111"></div><div style="position:absolute;left:117.9px;top:585.8px;width:4.2px;height:4.2px;border-radius:50%;background:#111"></div><div class="t" style="left:138.5px;top:578px;font-size:11px;color:#333;text-decoration:underline;letter-spacing:-0.2px;">Kiara Reinert</div><div class="t" style="left:265.5px;top:578px;font-size:11px;color:#666;">n/v</div><div class="t" style="left:329.5px;top:578px;font-size:11px;color:#333;">WGP</div><div class="t" style="left:493px;top:578px;font-size:11px;color:#333;">Planung</div><div class="t" style="left:625.5px;top:578px;font-size:11px;color:#666;">n..</div><div class="t" style="left:651px;top:578px;font-size:11px;color:#666;">n/v</div><div class="t" style="right:607.5px;top:578px;font-size:11px;color:#666;">n/v</div><svg style="position:absolute;left:779px;top:578px" width="17" height="17"><rect x="0" y="0" width="17" height="17" rx="2" fill="#6c6c6c"/><path d="M2.4 8.3 L6.5 12.2 L14.4 4.3" fill="none" stroke="#fff" stroke-width="2.1"/></svg><div class="t" style="right:478.5px;top:578px;font-size:11px;color:#333;letter-spacing:-0.2px;">0,00 €</div><div class="t" style="right:406.5px;top:578px;font-size:11px;color:#333;letter-spacing:-0.2px;">0,00 €</div><div class="t" style="right:342px;top:578px;font-size:11px;color:#333;letter-spacing:-0.2px;">0,00</div><svg style="position:absolute;left:1044px;top:578px" width="17" height="17"><rect x="1" y="1" width="15" height="15" rx="1.5" fill="#fff" stroke="#5e5e5e" stroke-width="2"/></svg><div class="t" style="right:212.5px;top:578px;font-size:11px;color:#333;letter-spacing:-0.2px;">0,00 €</div><div class="t" style="right:111.5px;top:578px;font-size:11px;color:#333;letter-spacing:-0.2px;">307.966,54 €</div><div class="t" style="right:11.5px;top:578px;font-size:11px;color:#333;letter-spacing:-0.2px;">23.914,44 €</div><div style="position:absolute;left:53px;top:624px;width:1305px;height:1px;background:#e3e3e3;"></div><div class="t" style="left:68px;top:603px;font-size:11px;color:#333;letter-spacing:-0.3px;">02.08...</div><div style="position:absolute;left:106.60000000000001px;top:610.8px;width:4.2px;height:4.2px;border-radius:50%;background:#111"></div><div style="position:absolute;left:112.25px;top:610.8px;width:4.2px;height:4.2px;border-radius:50%;background:#111"></div><div style="position:absolute;left:117.9px;top:610.8px;width:4.2px;height:4.2px;border-radius:50%;background:#111"></div><div class="t" style="left:138.5px;top:603px;font-size:11px;color:#333;text-decoration:underline;letter-spacing:-0.2px;">Leandra Walz</div><div class="t" style="left:265.5px;top:603px;font-size:11px;color:#666;">n/v</div><div class="t" style="left:329.5px;top:603px;font-size:11px;color:#333;">Wohnung</div><div class="t" style="left:493px;top:603px;font-size:11px;color:#333;">Planung</div><div class="t" style="left:625.5px;top:603px;font-size:11px;color:#666;">n..</div><div class="t" style="left:651px;top:603px;font-size:11px;color:#666;">n/v</div><div class="t" style="right:607.5px;top:603px;font-size:11px;color:#666;">n/v</div><svg style="position:absolute;left:779px;top:603px" width="17" height="17"><rect x="0" y="0" width="17" height="17" rx="2" fill="#6c6c6c"/><path d="M2.4 8.3 L6.5 12.2 L14.4 4.3" fill="none" stroke="#fff" stroke-width="2.1"/></svg><div class="t" style="right:478.5px;top:603px;font-size:11px;color:#333;letter-spacing:-0.2px;">0,00 €</div><div class="t" style="right:406.5px;top:603px;font-size:11px;color:#333;letter-spacing:-0.2px;">0,00 €</div><div class="t" style="right:342px;top:603px;font-size:11px;color:#333;letter-spacing:-0.2px;">0,00</div><svg style="position:absolute;left:1044px;top:603px" width="17" height="17"><rect x="1" y="1" width="15" height="15" rx="1.5" fill="#fff" stroke="#5e5e5e" stroke-width="2"/></svg><div class="t" style="right:212.5px;top:603px;font-size:11px;color:#333;letter-spacing:-0.2px;">0,00 €</div><div class="t" style="right:111.5px;top:603px;font-size:11px;color:#333;letter-spacing:-0.2px;">307.966,54 €</div><div class="t" style="right:11.5px;top:603px;font-size:11px;color:#333;letter-spacing:-0.2px;">23.914,44 €</div><div style="position:absolute;left:53px;top:649px;width:1305px;height:1px;background:#e3e3e3;"></div><div class="t" style="left:68px;top:628px;font-size:11px;color:#333;letter-spacing:-0.3px;">02.08...</div><div style="position:absolute;left:106.60000000000001px;top:635.8px;width:4.2px;height:4.2px;border-radius:50%;background:#111"></div><div style="position:absolute;left:112.25px;top:635.8px;width:4.2px;height:4.2px;border-radius:50%;background:#111"></div><div style="position:absolute;left:117.9px;top:635.8px;width:4.2px;height:4.2px;border-radius:50%;background:#111"></div><div class="t" style="left:138.5px;top:628px;font-size:11px;color:#333;text-decoration:underline;letter-spacing:-0.2px;">Leandra Walz</div><div class="t" style="left:265.5px;top:628px;font-size:11px;color:#666;">n/v</div><div class="t" style="left:329.5px;top:628px;font-size:11px;color:#333;">Bergland</div><div class="t" style="left:493px;top:628px;font-size:11px;color:#333;">Planung</div><div class="t" style="left:625.5px;top:628px;font-size:11px;color:#666;">n..</div><div class="t" style="left:651px;top:628px;font-size:11px;color:#666;">n/v</div><div class="t" style="right:607.5px;top:628px;font-size:11px;color:#666;">n/v</div><svg style="position:absolute;left:779px;top:628px" width="17" height="17"><rect x="0" y="0" width="17" height="17" rx="2" fill="#6c6c6c"/><path d="M2.4 8.3 L6.5 12.2 L14.4 4.3" fill="none" stroke="#fff" stroke-width="2.1"/></svg><div class="t" style="right:478.5px;top:628px;font-size:11px;color:#333;letter-spacing:-0.2px;">0,00 €</div><div class="t" style="right:406.5px;top:628px;font-size:11px;color:#333;letter-spacing:-0.2px;">0,00 €</div><div class="t" style="right:342px;top:628px;font-size:11px;color:#333;letter-spacing:-0.2px;">0,00</div><svg style="position:absolute;left:1044px;top:628px" width="17" height="17"><rect x="1" y="1" width="15" height="15" rx="1.5" fill="#fff" stroke="#5e5e5e" stroke-width="2"/></svg><div class="t" style="right:212.5px;top:628px;font-size:11px;color:#333;letter-spacing:-0.2px;">0,00 €</div><div class="t" style="right:111.5px;top:628px;font-size:11px;color:#333;letter-spacing:-0.2px;">307.966,54 €</div><div class="t" style="right:11.5px;top:628px;font-size:11px;color:#333;letter-spacing:-0.2px;">23.914,44 €</div><div style="position:absolute;left:53px;top:674px;width:1305px;height:1px;background:#e3e3e3;"></div><div class="t" style="left:68px;top:653px;font-size:11px;color:#333;letter-spacing:-0.3px;">02.08...</div><div style="position:absolute;left:106.60000000000001px;top:660.8px;width:4.2px;height:4.2px;border-radius:50%;background:#111"></div><div style="position:absolute;left:112.25px;top:660.8px;width:4.2px;height:4.2px;border-radius:50%;background:#111"></div><div style="position:absolute;left:117.9px;top:660.8px;width:4.2px;height:4.2px;border-radius:50%;background:#111"></div><div class="t" style="left:138.5px;top:653px;font-size:11px;color:#333;text-decoration:underline;letter-spacing:-0.2px;">Leandra Walz</div><div class="t" style="left:265.5px;top:653px;font-size:11px;color:#666;">n/v</div><div class="t" style="left:329.5px;top:653px;font-size:11px;color:#333;">Umbau Hofstelle</div><div class="t" style="left:493px;top:653px;font-size:11px;color:#333;">Planung</div><div class="t" style="left:625.5px;top:653px;font-size:11px;color:#666;">n..</div><div class="t" style="left:651px;top:653px;font-size:11px;color:#666;">n/v</div><div class="t" style="right:607.5px;top:653px;font-size:11px;color:#666;">n/v</div><svg style="position:absolute;left:779px;top:653px" width="17" height="17"><rect x="0" y="0" width="17" height="17" rx="2" fill="#6c6c6c"/><path d="M2.4 8.3 L6.5 12.2 L14.4 4.3" fill="none" stroke="#fff" stroke-width="2.1"/></svg><div class="t" style="right:478.5px;top:653px;font-size:11px;color:#333;letter-spacing:-0.2px;">0,00 €</div><div class="t" style="right:406.5px;top:653px;font-size:11px;color:#333;letter-spacing:-0.2px;">0,00 €</div><div class="t" style="right:342px;top:653px;font-size:11px;color:#333;letter-spacing:-0.2px;">0,00</div><svg style="position:absolute;left:1044px;top:653px" width="17" height="17"><rect x="1" y="1" width="15" height="15" rx="1.5" fill="#fff" stroke="#5e5e5e" stroke-width="2"/></svg><div class="t" style="right:212.5px;top:653px;font-size:11px;color:#333;letter-spacing:-0.2px;">0,00 €</div><div class="t" style="right:111.5px;top:653px;font-size:11px;color:#333;letter-spacing:-0.2px;">307.966,54 €</div><div class="t" style="right:11.5px;top:653px;font-size:11px;color:#333;letter-spacing:-0.2px;">23.914,44 €</div><div style="position:absolute;left:53px;top:714px;width:1305px;height:1px;background:#e3e3e3;"></div><div class="t" style="left:68px;top:685px;font-size:11px;color:#333;letter-spacing:-0.3px;">02.08...</div><div style="position:absolute;left:106.60000000000001px;top:692.8px;width:4.2px;height:4.2px;border-radius:50%;background:#111"></div><div style="position:absolute;left:112.25px;top:692.8px;width:4.2px;height:4.2px;border-radius:50%;background:#111"></div><div style="position:absolute;left:117.9px;top:692.8px;width:4.2px;height:4.2px;border-radius:50%;background:#111"></div><div class="t" style="left:138.5px;top:685px;font-size:11px;color:#333;text-decoration:underline;letter-spacing:-0.2px;">Leandra Walz</div><div class="t" style="left:265.5px;top:685px;font-size:11px;color:#666;">n/v</div><div class="t" style="left:329.5px;top:678px;font-size:11px;color:#333;">Grenzkontrolle Meran</div><div class="t" style="left:329.5px;top:693px;font-size:11px;color:#333;">Obermais</div><div class="t" style="left:493px;top:685px;font-size:11px;color:#333;">Planung</div><div class="t" style="left:625.5px;top:685px;font-size:11px;color:#666;">n..</div><div class="t" style="left:651px;top:685px;font-size:11px;color:#666;">n/v</div><div class="t" style="right:607.5px;top:685px;font-size:11px;color:#666;">n/v</div><svg style="position:absolute;left:779px;top:686px" width="17" height="17"><rect x="0" y="0" width="17" height="17" rx="2" fill="#6c6c6c"/><path d="M2.4 8.3 L6.5 12.2 L14.4 4.3" fill="none" stroke="#fff" stroke-width="2.1"/></svg><div class="t" style="right:478.5px;top:685px;font-size:11px;color:#333;letter-spacing:-0.2px;">0,00 €</div><div class="t" style="right:406.5px;top:685px;font-size:11px;color:#333;letter-spacing:-0.2px;">0,00 €</div><div class="t" style="right:342px;top:685px;font-size:11px;color:#333;letter-spacing:-0.2px;">0,00</div><svg style="position:absolute;left:1044px;top:686px" width="17" height="17"><rect x="1" y="1" width="15" height="15" rx="1.5" fill="#fff" stroke="#5e5e5e" stroke-width="2"/></svg><div class="t" style="right:212.5px;top:685px;font-size:11px;color:#333;letter-spacing:-0.2px;">0,00 €</div><div class="t" style="right:111.5px;top:685px;font-size:11px;color:#333;letter-spacing:-0.2px;">307.966,54 €</div><div class="t" style="right:11.5px;top:685px;font-size:11px;color:#333;letter-spacing:-0.2px;">23.914,44 €</div><div style="position:absolute;left:53px;top:754px;width:1305px;height:1px;background:#e3e3e3;"></div><div class="t" style="left:68px;top:725px;font-size:11px;color:#333;letter-spacing:-0.3px;">02.08...</div><div style="position:absolute;left:106.60000000000001px;top:732.8px;width:4.2px;height:4.2px;border-radius:50%;background:#111"></div><div style="position:absolute;left:112.25px;top:732.8px;width:4.2px;height:4.2px;border-radius:50%;background:#111"></div><div style="position:absolute;left:117.9px;top:732.8px;width:4.2px;height:4.2px;border-radius:50%;background:#111"></div><div class="t" style="left:138.5px;top:725px;font-size:11px;color:#333;text-decoration:underline;letter-spacing:-0.2px;">Leandra Walz</div><div class="t" style="left:265.5px;top:725px;font-size:11px;color:#666;">n/v</div><div class="t" style="left:329.5px;top:718px;font-size:11px;color:#333;">Abbruch und Wiederaufbau</div><div class="t" style="left:329.5px;top:733px;font-size:11px;color:#333;">Hofs</div><div class="t" style="left:493px;top:725px;font-size:11px;color:#333;">Planung</div><div class="t" style="left:625.5px;top:725px;font-size:11px;color:#666;">n..</div><div class="t" style="left:651px;top:725px;font-size:11px;color:#666;">n/v</div><div class="t" style="right:607.5px;top:725px;font-size:11px;color:#666;">n/v</div><svg style="position:absolute;left:779px;top:726px" width="17" height="17"><rect x="0" y="0" width="17" height="17" rx="2" fill="#6c6c6c"/><path d="M2.4 8.3 L6.5 12.2 L14.4 4.3" fill="none" stroke="#fff" stroke-width="2.1"/></svg><div class="t" style="right:478.5px;top:725px;font-size:11px;color:#333;letter-spacing:-0.2px;">0,00 €</div><div class="t" style="right:406.5px;top:725px;font-size:11px;color:#333;letter-spacing:-0.2px;">0,00 €</div><div class="t" style="right:342px;top:725px;font-size:11px;color:#333;letter-spacing:-0.2px;">0,00</div><svg style="position:absolute;left:1044px;top:726px" width="17" height="17"><rect x="1" y="1" width="15" height="15" rx="1.5" fill="#fff" stroke="#5e5e5e" stroke-width="2"/></svg><div class="t" style="right:212.5px;top:725px;font-size:11px;color:#333;letter-spacing:-0.2px;">0,00 €</div><div class="t" style="right:111.5px;top:725px;font-size:11px;color:#333;letter-spacing:-0.2px;">307.966,54 €</div><div class="t" style="right:11.5px;top:725px;font-size:11px;color:#333;letter-spacing:-0.2px;">23.914,44 €</div><div style="position:absolute;left:53px;top:779px;width:1305px;height:1px;background:#e3e3e3;"></div><div class="t" style="left:68px;top:758px;font-size:11px;color:#333;letter-spacing:-0.3px;">02.08...</div><div style="position:absolute;left:106.60000000000001px;top:765.8px;width:4.2px;height:4.2px;border-radius:50%;background:#111"></div><div style="position:absolute;left:112.25px;top:765.8px;width:4.2px;height:4.2px;border-radius:50%;background:#111"></div><div style="position:absolute;left:117.9px;top:765.8px;width:4.2px;height:4.2px;border-radius:50%;background:#111"></div><div class="t" style="left:138.5px;top:758px;font-size:11px;color:#333;text-decoration:underline;letter-spacing:-0.2px;">Leandra Walz</div><div class="t" style="left:265.5px;top:758px;font-size:11px;color:#666;">n/v</div><div class="t" style="left:329.5px;top:758px;font-size:11px;color:#333;">Aussiedelung Hofstelle</div><div class="t" style="left:493px;top:758px;font-size:11px;color:#333;">Planung</div><div class="t" style="left:625.5px;top:758px;font-size:11px;color:#666;">n..</div><div class="t" style="left:651px;top:758px;font-size:11px;color:#666;">n/v</div><div class="t" style="right:607.5px;top:758px;font-size:11px;color:#666;">n/v</div><svg style="position:absolute;left:779px;top:758px" width="17" height="17"><rect x="0" y="0" width="17" height="17" rx="2" fill="#6c6c6c"/><path d="M2.4 8.3 L6.5 12.2 L14.4 4.3" fill="none" stroke="#fff" stroke-width="2.1"/></svg><div class="t" style="right:478.5px;top:758px;font-size:11px;color:#333;letter-spacing:-0.2px;">0,00 €</div><div class="t" style="right:406.5px;top:758px;font-size:11px;color:#333;letter-spacing:-0.2px;">97,00 €</div><div class="t" style="right:342px;top:758px;font-size:11px;color:#333;letter-spacing:-0.2px;">0,00</div><svg style="position:absolute;left:1044px;top:758px" width="17" height="17"><rect x="1" y="1" width="15" height="15" rx="1.5" fill="#fff" stroke="#5e5e5e" stroke-width="2"/></svg><div class="t" style="right:212.5px;top:758px;font-size:11px;color:#333;letter-spacing:-0.2px;">0,00 €</div><div class="t" style="right:111.5px;top:758px;font-size:11px;color:#333;letter-spacing:-0.2px;">307.966,54 €</div><div class="t" style="right:11.5px;top:758px;font-size:11px;color:#333;letter-spacing:-0.2px;">23.914,44 €</div><div style="position:absolute;left:53px;top:804px;width:1305px;height:1px;background:#e3e3e3;"></div><div class="t" style="left:68px;top:783px;font-size:11px;color:#333;letter-spacing:-0.3px;">02.08...</div><div style="position:absolute;left:106.60000000000001px;top:790.8px;width:4.2px;height:4.2px;border-radius:50%;background:#111"></div><div style="position:absolute;left:112.25px;top:790.8px;width:4.2px;height:4.2px;border-radius:50%;background:#111"></div><div style="position:absolute;left:117.9px;top:790.8px;width:4.2px;height:4.2px;border-radius:50%;background:#111"></div><div class="t" style="left:138.5px;top:783px;font-size:11px;color:#333;text-decoration:underline;letter-spacing:-0.2px;">Leandra Walz</div><div class="t" style="left:265.5px;top:783px;font-size:11px;color:#666;">n/v</div><div class="t" style="left:329.5px;top:783px;font-size:11px;color:#333;">Teilungsplan</div><div class="t" style="left:493px;top:783px;font-size:11px;color:#333;">Planung</div><div class="t" style="left:625.5px;top:783px;font-size:11px;color:#666;">n..</div><div class="t" style="left:651px;top:783px;font-size:11px;color:#666;">n/v</div><div class="t" style="right:607.5px;top:783px;font-size:11px;color:#666;">n/v</div><svg style="position:absolute;left:779px;top:783px" width="17" height="17"><rect x="0" y="0" width="17" height="17" rx="2" fill="#6c6c6c"/><path d="M2.4 8.3 L6.5 12.2 L14.4 4.3" fill="none" stroke="#fff" stroke-width="2.1"/></svg><div class="t" style="right:478.5px;top:783px;font-size:11px;color:#333;letter-spacing:-0.2px;">0,00 €</div><div class="t" style="right:406.5px;top:783px;font-size:11px;color:#333;letter-spacing:-0.2px;">0,00 €</div><div class="t" style="right:342px;top:783px;font-size:11px;color:#333;letter-spacing:-0.2px;">0,00</div><svg style="position:absolute;left:1044px;top:783px" width="17" height="17"><rect x="1" y="1" width="15" height="15" rx="1.5" fill="#fff" stroke="#5e5e5e" stroke-width="2"/></svg><div class="t" style="right:212.5px;top:783px;font-size:11px;color:#333;letter-spacing:-0.2px;">0,00 €</div><div class="t" style="right:111.5px;top:783px;font-size:11px;color:#333;letter-spacing:-0.2px;">307.966,54 €</div><div class="t" style="right:11.5px;top:783px;font-size:11px;color:#333;letter-spacing:-0.2px;">23.914,44 €</div><div style="position:absolute;left:53px;top:830px;width:1305px;height:1px;background:#e3e3e3;"></div><div class="t" style="left:68px;top:808px;font-size:11px;color:#333;letter-spacing:-0.3px;">02.08...</div><div style="position:absolute;left:106.60000000000001px;top:815.8px;width:4.2px;height:4.2px;border-radius:50%;background:#111"></div><div style="position:absolute;left:112.25px;top:815.8px;width:4.2px;height:4.2px;border-radius:50%;background:#111"></div><div style="position:absolute;left:117.9px;top:815.8px;width:4.2px;height:4.2px;border-radius:50%;background:#111"></div><div class="t" style="left:138.5px;top:808px;font-size:11px;color:#333;text-decoration:underline;letter-spacing:-0.2px;">Leandra Walz</div><div class="t" style="left:265.5px;top:808px;font-size:11px;color:#666;">n/v</div><div class="t" style="left:329.5px;top:808px;font-size:11px;color:#333;">Greiter am Waal</div><div class="t" style="left:493px;top:808px;font-size:11px;color:#333;">Planung</div><div class="t" style="left:625.5px;top:808px;font-size:11px;color:#666;">n..</div><div class="t" style="left:651px;top:808px;font-size:11px;color:#666;">n/v</div><div class="t" style="right:607.5px;top:808px;font-size:11px;color:#666;">n/v</div><svg style="position:absolute;left:779px;top:809px" width="17" height="17"><rect x="0" y="0" width="17" height="17" rx="2" fill="#6c6c6c"/><path d="M2.4 8.3 L6.5 12.2 L14.4 4.3" fill="none" stroke="#fff" stroke-width="2.1"/></svg><div class="t" style="right:478.5px;top:808px;font-size:11px;color:#333;letter-spacing:-0.2px;">0,00 €</div><div class="t" style="right:406.5px;top:808px;font-size:11px;color:#333;letter-spacing:-0.2px;">0,00 €</div><div class="t" style="right:342px;top:808px;font-size:11px;color:#333;letter-spacing:-0.2px;">0,00</div><svg style="position:absolute;left:1044px;top:809px" width="17" height="17"><rect x="1" y="1" width="15" height="15" rx="1.5" fill="#fff" stroke="#5e5e5e" stroke-width="2"/></svg><div class="t" style="right:212.5px;top:808px;font-size:11px;color:#333;letter-spacing:-0.2px;">0,00 €</div><div class="t" style="right:111.5px;top:808px;font-size:11px;color:#333;letter-spacing:-0.2px;">307.966,54 €</div><div class="t" style="right:11.5px;top:808px;font-size:11px;color:#333;letter-spacing:-0.2px;">23.914,44 €</div><div class="t" style="left:68px;top:834px;font-size:11px;color:#333;letter-spacing:-0.3px;">02.08...</div><div style="position:absolute;left:106.60000000000001px;top:841.8px;width:4.2px;height:4.2px;border-radius:50%;background:#111"></div><div style="position:absolute;left:112.25px;top:841.8px;width:4.2px;height:4.2px;border-radius:50%;background:#111"></div><div style="position:absolute;left:117.9px;top:841.8px;width:4.2px;height:4.2px;border-radius:50%;background:#111"></div><div class="t" style="left:138.5px;top:834px;font-size:11px;color:#333;text-decoration:underline;letter-spacing:-0.2px;">Leandra Walz</div><div class="t" style="left:265.5px;top:834px;font-size:11px;color:#666;">n/v</div><div class="t" style="left:329.5px;top:834px;font-size:11px;color:#333;">Grenzkontrolle</div><div class="t" style="left:493px;top:834px;font-size:11px;color:#333;">Planung</div><div class="t" style="left:625.5px;top:834px;font-size:11px;color:#666;">n..</div><div class="t" style="left:651px;top:834px;font-size:11px;color:#666;">n/v</div><div class="t" style="right:607.5px;top:834px;font-size:11px;color:#666;">n/v</div><svg style="position:absolute;left:779px;top:834px" width="17" height="17"><rect x="0" y="0" width="17" height="17" rx="2" fill="#6c6c6c"/><path d="M2.4 8.3 L6.5 12.2 L14.4 4.3" fill="none" stroke="#fff" stroke-width="2.1"/></svg><div class="t" style="right:478.5px;top:834px;font-size:11px;color:#333;letter-spacing:-0.2px;">0,00 €</div><div class="t" style="right:406.5px;top:834px;font-size:11px;color:#333;letter-spacing:-0.2px;">0,00 €</div><div class="t" style="right:342px;top:834px;font-size:11px;color:#333;letter-spacing:-0.2px;">0,00</div><svg style="position:absolute;left:1044px;top:834px" width="17" height="17"><rect x="1" y="1" width="15" height="15" rx="1.5" fill="#fff" stroke="#5e5e5e" stroke-width="2"/></svg><div class="t" style="right:212.5px;top:834px;font-size:11px;color:#333;letter-spacing:-0.2px;">0,00 €</div><div class="t" style="right:111.5px;top:834px;font-size:11px;color:#333;letter-spacing:-0.2px;">307.966,54 €</div><div class="t" style="right:11.5px;top:834px;font-size:11px;color:#333;letter-spacing:-0.2px;">23.914,44 €</div><div style="position:absolute;left:1291px;top:790px;width:52px;height:52px;border-radius:50%;background:#0088d2;box-shadow:0 1px 4px rgba(0,0,0,0.25)"></div><div style="position:absolute;left:1310px;top:814.5px;width:14.5px;height:2px;background:#fff;"></div><div style="position:absolute;left:1316.3px;top:808.5px;width:2px;height:13.5px;background:#fff;"></div>
</body></html>
